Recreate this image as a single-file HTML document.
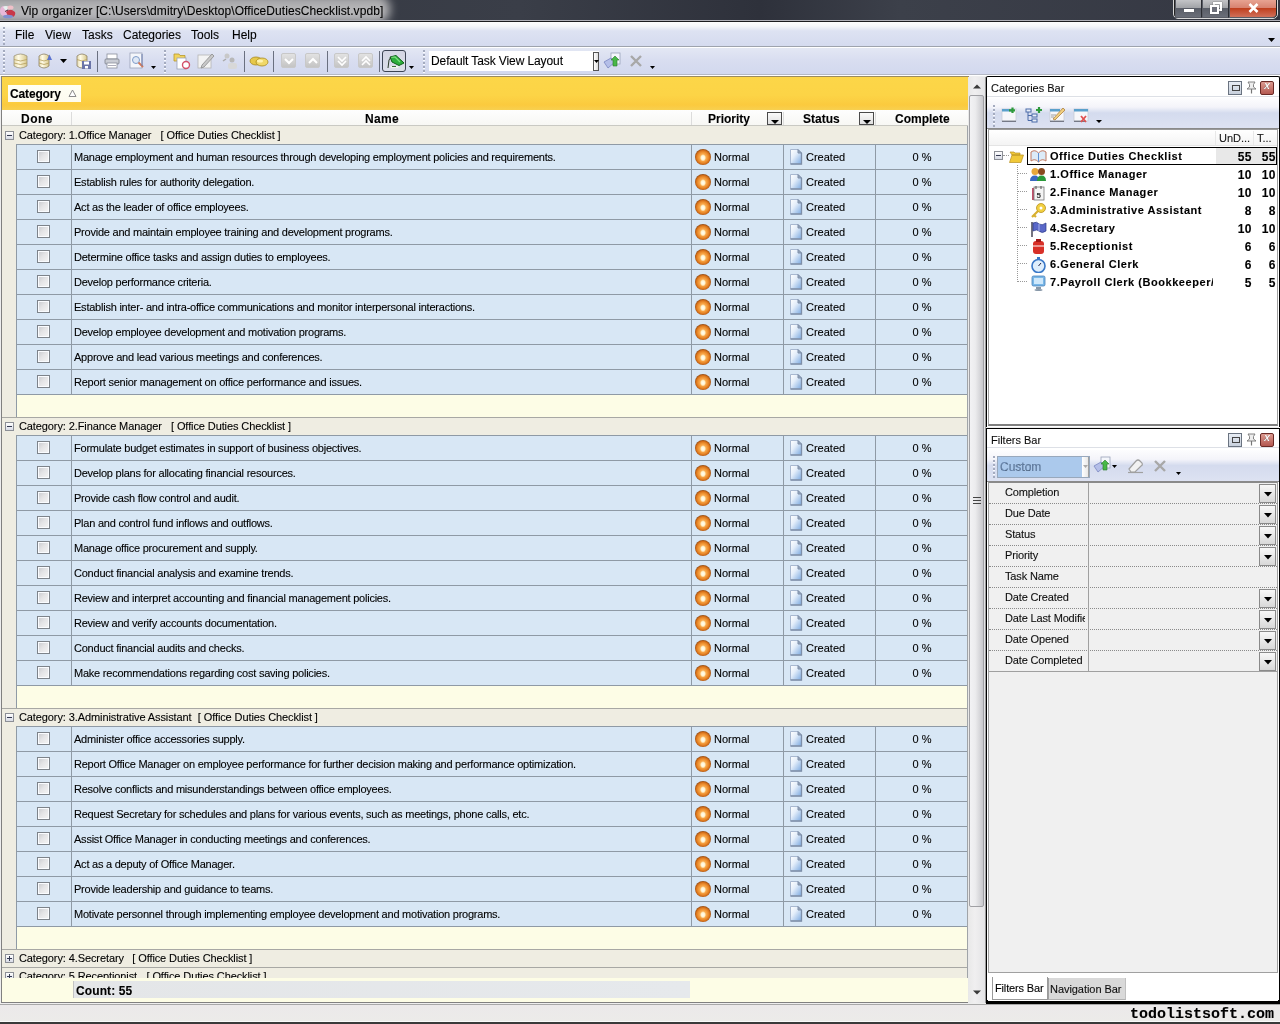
<!DOCTYPE html>
<html><head><meta charset="utf-8"><style>
*{box-sizing:border-box;margin:0;padding:0}
#page{position:absolute;left:0;top:0;width:1280px;height:1024px;overflow:hidden;will-change:transform;-webkit-text-stroke:0.1px #000}
html,body{width:1280px;height:1024px;overflow:hidden;background:#eeeeee;font-family:"Liberation Sans",sans-serif;font-size:11px;color:#000;position:relative}
.abs{position:absolute}
/* title bar */
#title{position:absolute;left:0;top:0;width:1280px;height:22px;background:linear-gradient(90deg,#33363f 0,#3a3e48 520px,#2e313b 760px,#3c404a 900px,#343742 1280px);border-bottom:1px solid #1c1c20;overflow:hidden}
#title::after{content:"";position:absolute;left:0;top:20px;width:1280px;height:1px;background:#b0b0b8}
#title .glow{position:absolute;left:-20px;top:-6px;width:410px;height:30px;border-radius:14px;background:linear-gradient(#9a9a9c,#b4b4b6 40%,#bababc 70%,#a4a4a8);filter:blur(5px)}
#title .tx{position:absolute;left:21px;top:4px;font-size:12px;color:#000;white-space:nowrap;letter-spacing:0.08px}
#title .ic{position:absolute;left:1px;top:3px;width:15px;height:14px}
.wbtn{position:absolute;top:0;height:18px;border:1px solid #5a5d66;border-top:none;background:linear-gradient(#8b8e96,#4e525c)}
/* menu */
#menu{position:absolute;left:0;top:22px;width:1280px;height:25px;background:linear-gradient(#fdfdfe 0,#f6f7fb 4px,#dde2f2 9px,#d5dbef 100%);border-bottom:1px solid #9ea3ad}
#menu span{position:absolute;top:6px;font-size:12px}
.grip{position:absolute;width:2px;background:repeating-linear-gradient(#a4abbf 0 2px,#fafbff 2px 3px,transparent 3px 4px)}
#tb{position:absolute;left:0;top:47px;width:1280px;height:29px;background:linear-gradient(#e4e8f4 0,#d8ddf0 50%,#d2d8ee 100%);box-shadow:inset 0 1px 0 #fff;border-bottom:1px solid #fff}
#tb::after{content:"";position:absolute;left:0;top:27px;width:1280px;height:1px;background:#b4b8c4}
.sep{position:absolute;top:4px;width:1px;height:21px;background:#6a7080}
/* grid */
#grid{position:absolute;left:0;top:0;width:1px;height:1px}
#gridbg{position:absolute;left:1px;top:76px;width:968px;height:927px;border:1px solid #808080;border-top-color:#9a8a60;border-right:none;background:#fdfde6}
#groupband{position:absolute;left:2px;top:77px;width:966px;height:33px;background:linear-gradient(#fcd648 0,#fcd446 55%,#fbca3e 85%,#f8d050 100%)}
#catbtn{position:absolute;left:8px;top:85px;width:73px;height:17px;background:linear-gradient(#fffff4,#fdfbf0);font-weight:bold;font-size:12px}
#hdr{position:absolute;left:2px;top:110px;width:966px;height:16px;background:linear-gradient(#fefefe,#f7f7f4);border-bottom:1px solid #c9c9c3}
#hdr span{position:absolute;top:2px;font-weight:bold;font-size:12px}
#rowsclip{position:absolute;left:0;top:126px;width:968px;height:852px;overflow:hidden}
.grp{position:absolute;left:2px;width:966px;background:#efede2}
.grp .gt,.grp .gt2{position:absolute;left:17px;white-space:nowrap;letter-spacing:-0.1px}
.ebox{position:absolute;left:3px;top:4px;width:9px;height:9px;border:1px solid #8c8f96;background:linear-gradient(#fff,#d8dbe6)}
.ebox .mn{position:absolute;left:1px;top:3px;width:5px;height:1px;background:#353a52}
.ebox .pl{position:absolute;left:3px;top:1px;width:1px;height:5px;background:#353a52}
.row{position:absolute;left:16px;width:952px;height:25px;background:#d8e7f5;border-top:1px solid #8f9aa5;border-left:1px solid #8f9aa5;border-right:1px solid #8f9aa5}
.row>span{position:absolute;top:0;height:24px;line-height:25px;white-space:nowrap;overflow:hidden}
.row .cb{left:20px;top:5px;width:13px;height:13px;border:1px solid #7d838a;box-shadow:inset 0 0 0 1px #fafcff;background:linear-gradient(135deg,#c6c8cc 0,#e4e4e6 45%,#f6f6f6 100%)}
.row .nm{left:54px;width:620px;border-left:1px solid #8f9aa5;padding-left:2px;letter-spacing:-0.23px}
.row .pr{left:674px;width:92px;border-left:1px solid #8f9aa5;padding-left:22px}
.row .st{left:766px;width:92px;border-left:1px solid #8f9aa5;padding-left:22px}
.row .cp{left:858px;width:92px;border-left:1px solid #8f9aa5;text-align:center;padding-left:1px}
.orb{position:absolute;left:3px;top:4px;width:16px;height:16px;border-radius:50%;background:radial-gradient(ellipse 3px 3.6px at 50% 55%,#fffef4 0,#fff3d0 60%,rgba(255,230,170,0) 100%),radial-gradient(circle at 50% 52%,#ffd890 0,#f6a040 4px,#e88a2c 5.5px,#d87018 6.8px,#9a5218 8px)}
.doc{position:absolute;left:5px;top:3px;width:15px;height:17px}
.newrow{position:absolute;left:16px;width:952px;height:23px;background:#fdfde6;border-top:1px solid #8f9aa5;border-left:1px solid #8f9aa5}
.gutter{position:absolute;left:2px;width:14px;background:#efede2}
#footer{position:absolute;left:2px;top:978px;width:966px;height:24px;background:#fdfde6}
#footer .cnt{position:absolute;left:71px;top:3px;width:617px;height:17px;background:linear-gradient(90deg,#e4e6e8,#e6e9ec);border-left:1px solid #c4c4c4;font-weight:bold;font-size:12px;padding-left:2px;line-height:20px;letter-spacing:0.1px}
#vscroll{position:absolute;left:968px;top:77px;width:18px;height:926px;background:linear-gradient(90deg,#e8e8e8,#f0eff0 40%,#e4e4e6);border-right:1px solid #9a9a9a}
#thumb{position:absolute;left:1px;top:18px;width:15px;height:812px;border:1px solid #a0a0a4;border-radius:2px;background:linear-gradient(90deg,#f2f2f4 0,#ececee 40%,#c8c8cc 100%)}
/* right panel */
#right{position:absolute;left:986px;top:77px;width:294px;height:926px;border:2px solid #000;border-right:1px solid #000;background:#fff}
#status{position:absolute;left:0;top:1004px;width:1280px;height:18px;background:linear-gradient(#ebe9ea,#ecebe9);border-top:1px solid #a8a8a8;border-bottom:1px solid #fafafa}
#status span{position:absolute;left:1130px;top:1px;font-family:"Liberation Mono",monospace;font-weight:bold;font-size:15px}
#taskbar{position:absolute;left:0;top:1022px;width:1280px;height:2px;background:#3a3a3a}
.wframe{position:absolute;left:1173px;top:-2px;width:105px;height:21px;border:1px solid #d8d8d8;border-radius:0 0 5px 5px;background:#222}
.wbtn{position:absolute;top:0;height:18px;border-right:1px solid #2b2d33;background:linear-gradient(#c3c4c7 0,#a2a4a8 45%,#5a5e68 50%,#6a6e78 100%)}
.wbtn.close{border-right:none;border-radius:0 0 4px 0;background:linear-gradient(#e7a392 0,#d88370 45%,#c0401f 50%,#d0705a 100%)}
.gbtn{position:absolute;top:6px;width:15px;height:15px;border-radius:2px;background:linear-gradient(#e2e2e2,#c4c4c4);border:1px solid #c8c8c8}
.gbtn svg{position:absolute;left:0;top:0}
.ptitle{position:absolute;left:987px;width:292px;height:19px;background:#fff;border-bottom:1px solid #dde0e6;padding-left:4px;line-height:21px;font-size:11px;color:#111}
.pbtns{position:absolute;left:1228px;width:46px;height:14px}
.pbtns .pf{position:absolute;left:0;top:0;width:14px;height:14px;border:1px solid #6a7380;background:linear-gradient(#e8edf4,#c8d0dc)}
.pbtns .pf::after{content:"";position:absolute;left:3px;top:3px;width:6px;height:4px;border:1px solid #444}
.pbtns .pp{position:absolute;left:18px;top:0}
.pbtns .pc{position:absolute;left:32px;top:0;width:14px;height:14px;border:1px solid #6a2a26;border-radius:2px;background:linear-gradient(#dc9a90,#b45850)}
.pbtns .pc::after{content:"x";position:absolute;left:3px;top:-3px;color:#fff;font-weight:bold;font-size:11px}
.ptb{position:absolute;left:987px;width:292px;background:linear-gradient(#fdfdfe 0,#f4f4fa 30%,#d4dbee 50%,#dde2f2 100%);border-bottom:1px solid #8a8a8a}
.tn{position:absolute;left:1050px;margin-top:1px;font-weight:bold;font-size:11px;white-space:nowrap;width:163px;overflow:hidden;letter-spacing:0.55px}
.tc1{position:absolute;left:1216px;margin-top:1px;width:36px;text-align:right;font-weight:bold;font-size:12px;letter-spacing:0.5px}
.tc2{position:absolute;left:1254px;margin-top:1px;width:22px;text-align:right;font-weight:bold;font-size:12px;letter-spacing:0.5px}
.pgn{position:absolute;left:1005px;margin-top:0px;font-size:11px;letter-spacing:-0.15px;white-space:nowrap;width:80px;overflow:hidden;color:#111}
.pgb{position:absolute;left:1259px;width:17px;height:19px;border:1px solid #8a8a8a;background:linear-gradient(#f8f8f8,#d8d8d8)}
.hsep{position:absolute;top:112px;width:1px;height:13px;background:#dcdcdc}
.hdd{position:absolute;top:112px;width:15px;height:13px;border:1px solid #4a4a4a;background:linear-gradient(#fafafa,#e0e0e0)}
.gl{position:absolute;left:2px;width:966px;height:1px;background:#a8a8a4}

</style></head><body><div id="page">
<svg width="0" height="0" style="position:absolute"><defs><linearGradient id="dg" x1="0" y1="0" x2="1" y2="1"><stop offset="0" stop-color="#ffffff"/><stop offset=".4" stop-color="#e4eefa"/><stop offset="1" stop-color="#7aa8e0"/></linearGradient></defs></svg>
<div id="title"><div class="glow"></div>
<svg class="abs" style="left:0;top:2px" width="17" height="17" viewBox="0 0 17 17"><ellipse cx="4" cy="9" rx="4" ry="5" fill="#e8b8d8"/><path d="M3 5 Q6 3 9 5 L6 9Z" fill="#e6f2ee"/><path d="M6 10 Q9 7 12 8 L15 10 Q16 13 13 15 L8 14Z" fill="#c83848"/><ellipse cx="10.5" cy="5.5" rx="3" ry="2" fill="#f0c0c8"/><ellipse cx="8" cy="14.5" rx="5" ry="1.8" fill="#8090d0"/><path d="M5 9.5 L8 8" stroke="#502830" stroke-width="1"/></svg>
<div class="tx">Vip organizer [C:\Users\dmitry\Desktop\OfficeDutiesChecklist.vpdb]</div>
<div class="wframe"></div>
<div class="wbtn" style="left:1175px;width:27px"><div class="abs" style="left:8px;top:9px;width:10px;height:3px;background:#fff;box-shadow:0 0 1px #444"></div></div>
<div class="wbtn" style="left:1202px;width:27px"><div class="abs" style="left:10px;top:2px;width:9px;height:9px;border:2px solid #fff;box-shadow:0 0 1px #444"></div><div class="abs" style="left:7px;top:5px;width:9px;height:9px;border:2px solid #fff;background:#6d707a;box-shadow:0 0 1px #444"></div></div>
<div class="wbtn close" style="left:1229px;width:47px"><svg class="abs" style="left:18px;top:3px" width="11" height="10" viewBox="0 0 11 10"><path d="M1.5 1 L9.5 9 M9.5 1 L1.5 9" stroke="#fff" stroke-width="2.6"/></svg></div>
</div>
<div id="menu"><div class="grip" style="left:3px;top:5px;height:18px"></div>
<span style="left:15px">File</span><span style="left:45px">View</span><span style="left:82px">Tasks</span><span style="left:123px">Categories</span><span style="left:191px">Tools</span><span style="left:232px">Help</span>
<svg class="abs" style="left:1268px;top:16px" width="8" height="5"><path d="M0 0H7L3.5 4Z" fill="#000"/></svg></div>
<div id="tb"><div class="grip" style="left:3px;top:3px;height:23px"></div>
<svg class="abs" style="left:13px;top:6px" width="15" height="16" viewBox="0 0 15 16"><defs><linearGradient id="dbg" x1="0" x2="1"><stop offset="0" stop-color="#e4dab0"/><stop offset=".35" stop-color="#fffbe6"/><stop offset="1" stop-color="#d8c88c"/></linearGradient></defs><path d="M1 3 Q7.5 -1 14 3 V13 Q7.5 17 1 13Z" fill="url(#dbg)" stroke="#9c9478" stroke-width=".8"/><path d="M1 6.5 Q7.5 9.5 14 6.5 M1 10 Q7.5 13 14 10" stroke="#b59e5a" fill="none" stroke-width=".8"/></svg>
<svg class="abs" style="left:38px;top:6px" width="15" height="16" viewBox="0 0 15 16"><path d="M1 3 Q6 -1 11 3 V13 Q6 17 1 13Z" fill="url(#dbg)" stroke="#8d8166" stroke-width=".8"/><path d="M1 6.5 Q6 9.5 11 6.5 M1 10 Q6 13 11 10" stroke="#b59e5a" fill="none" stroke-width=".8"/><path d="M9 7 L11.5 1.5 L14 7Z" fill="#5a72d0"/></svg>
<svg class="abs" style="left:60px;top:12px" width="8" height="5"><path d="M0 0H7L3.5 4Z" fill="#000"/></svg>
<svg class="abs" style="left:76px;top:6px" width="16" height="17" viewBox="0 0 16 17"><path d="M1 3 Q6 -1 11 3 V13 Q6 17 1 13Z" fill="url(#dbg)" stroke="#8d8166" stroke-width=".8"/><path d="M1 6.5 Q6 9.5 11 6.5" stroke="#b59e5a" fill="none" stroke-width=".8"/><rect x="6" y="8" width="9" height="8" fill="#6a74a8"/><rect x="8" y="8.5" width="5" height="3" fill="#fff"/><rect x="9" y="13" width="3" height="2.5" fill="#fff"/></svg>
<div class="sep" style="left:97px"></div>
<svg class="abs" style="left:104px;top:6px" width="16" height="16" viewBox="0 0 16 16"><rect x="3" y="1" width="10" height="5" fill="#fff" stroke="#8a8f9c" stroke-width=".8"/><rect x="1" y="6" width="14" height="5" rx="1" fill="#c9ccd4" stroke="#7b808c" stroke-width=".8"/><rect x="3" y="10" width="10" height="5" fill="#fff" stroke="#8a8f9c" stroke-width=".8"/><path d="M4 12.5H12" stroke="#99a" stroke-width=".8"/></svg>
<svg class="abs" style="left:129px;top:5px" width="16" height="17" viewBox="0 0 16 17"><rect x="1" y="1" width="12" height="15" fill="#f4f6fb" stroke="#9aa2b8" stroke-width=".8"/><circle cx="7" cy="8" r="3.5" fill="#dfe8f6" stroke="#7f9cc8" stroke-width="1"/><path d="M9.5 10.5 L14 15" stroke="#d27a5a" stroke-width="2"/><path d="M13 2V14" stroke="#6d7fae" stroke-width="1"/></svg>
<svg class="abs" style="left:151px;top:19px" width="6" height="4"><path d="M0 0H5L2.5 3Z" fill="#000"/></svg>
<div class="grip" style="left:164px;top:3px;height:23px"></div>
<svg class="abs" style="left:173px;top:5px" width="18" height="18" viewBox="0 0 18 18"><path d="M1 2H6L7 3.5H12V9H1Z" fill="#f2d45c" stroke="#b8982c" stroke-width=".8"/><rect x="4" y="6" width="9" height="11" fill="#fff" stroke="#9aa2b8" stroke-width=".8"/><circle cx="13" cy="13" r="3.5" fill="#fff" stroke="#d2506a" stroke-width="1.4"/></svg>
<svg class="abs" style="left:197px;top:5px" width="18" height="17" viewBox="0 0 18 17"><rect x="1" y="3" width="13" height="13" fill="#f3f3f3" stroke="#b4b4b4" stroke-width=".8"/><path d="M5 13 L15 2 L17 4 L7 15 L4 16Z" fill="#c8c8c8" stroke="#8c8c8c" stroke-width=".8"/></svg>
<svg class="abs" style="left:221px;top:5px" width="18" height="18" viewBox="0 0 18 18"><circle cx="6" cy="4" r="2.5" fill="#c8c8c8"/><circle cx="11" cy="8" r="2.5" fill="#b8b8b8"/><rect x="7" y="11" width="9" height="6" rx="2" fill="#d8d8d8"/><path d="M2 9 L5 7" stroke="#aaa" stroke-width="1.5"/></svg>
<div class="sep" style="left:244px"></div>
<svg class="abs" style="left:249px;top:8px" width="20" height="12" viewBox="0 0 20 12"><ellipse cx="7" cy="6" rx="6" ry="4" fill="#e6c84a" stroke="#a88a20" stroke-width=".8"/><ellipse cx="13" cy="7" rx="6" ry="4" fill="#f0d868" stroke="#a88a20" stroke-width=".8"/><ellipse cx="11" cy="6" rx="3" ry="1.5" fill="#fff3b0"/></svg>
<div class="sep" style="left:273px"></div>
<div class="gbtn" style="left:281px"><svg width="14" height="14"><path d="M3 5 L7 9 L11 5" stroke="#fff" stroke-width="2" fill="none"/></svg></div>
<div class="gbtn" style="left:305px"><svg width="14" height="14"><path d="M3 9 L7 5 L11 9" stroke="#fff" stroke-width="2" fill="none"/></svg></div>
<div class="sep" style="left:327px"></div>
<div class="gbtn" style="left:334px"><svg width="14" height="14"><path d="M3 3 L7 7 L11 3 M3 7 L7 11 L11 7" stroke="#fff" stroke-width="1.6" fill="none"/></svg></div>
<div class="gbtn" style="left:358px"><svg width="14" height="14"><path d="M3 7 L7 3 L11 7 M3 11 L7 7 L11 11" stroke="#fff" stroke-width="1.6" fill="none"/></svg></div>
<div class="sep" style="left:379px"></div>
<div class="abs" style="left:382px;top:3px;width:24px;height:22px;border:1px solid #3c4454;border-radius:3px;background:linear-gradient(#d4d6e4,#dcdfea)"><svg class="abs" style="left:0;top:0" width="22" height="20" viewBox="0 0 22 20"><path d="M7 6 L13 4.5 L21 12 L16 14.5 L9 11Z" fill="#2cae3c" stroke="#0c6018" stroke-width="1"/><path d="M8 6.5 L12 6 L17 11" stroke="#7ae07e" stroke-width="1.2" fill="none"/><path d="M5 17 L6 9 L8 6" stroke="#2a3a2a" stroke-width="1" fill="none"/><path d="M7 15 L16 15 L15 17 L8 17Z" fill="#eef6ee"/><path d="M9 15.5 H13" stroke="#3a6a3a" stroke-width="1"/></svg></div>
<svg class="abs" style="left:409px;top:19px" width="6" height="4"><path d="M0 0H5L2.5 3Z" fill="#000"/></svg>
<div class="grip" style="left:423px;top:3px;height:23px"></div>
<div class="abs" style="left:429px;top:4px;width:170px;height:20px;background:#fff"><span class="abs" style="left:2px;top:3px;font-size:12px;letter-spacing:-0.1px">Default Task View Layout</span><div class="abs" style="left:164px;top:1px;width:6px;height:19px;border:1px solid #555;background:linear-gradient(90deg,#fff,#ddd)"><svg class="abs" style="left:0;top:7px" width="5" height="4"><path d="M0 0H5L2.5 3Z" fill="#000"/></svg></div></div>
<svg class="abs" style="left:603px;top:5px" width="19" height="18" viewBox="0 0 19 18"><rect x="8" y="1" width="9" height="11" fill="#f4f6fb" stroke="#9aa2b8" stroke-width=".8"/><path d="M1 10 L8 6 L12 10 L5 16Z" fill="#b4bee8" stroke="#7a86c0" stroke-width=".8"/><path d="M10 14 V8 L8 8 L12 4 L16 8 L14 8 V14Z" fill="#48b848" stroke="#2a7a2a" stroke-width=".6"/></svg>
<svg class="abs" style="left:629px;top:7px" width="14" height="14" viewBox="0 0 14 14"><path d="M2 2 L12 12 M12 2 L2 12" stroke="#a8a8a8" stroke-width="2.4"/></svg>
<svg class="abs" style="left:650px;top:19px" width="6" height="4"><path d="M0 0H5L2.5 3Z" fill="#000"/></svg>
</div>

<div id="grid"><div id="gridbg"></div><div id="groupband"></div><div id="catbtn"><span class="abs" style="left:2px;top:2px;letter-spacing:-0.15px">Category</span><svg class="abs" style="left:60px;top:4px" width="9" height="9" viewBox="0 0 9 9"><path d="M4.5 1 L8 7.5 H1Z" fill="#fff" stroke="#8a8a8a" stroke-width="1"/></svg></div><div id="hdr"><span style="left:19px;letter-spacing:0.5px">Done</span><span style="left:363px;letter-spacing:0.3px">Name</span><span style="left:706px">Priority</span><span style="left:801px">Status</span><span style="left:893px">Complete</span></div><div class="hsep" style="left:71px"></div><div class="hsep" style="left:691px"></div><div class="hsep" style="left:783px"></div><div class="hsep" style="left:875px"></div><div class="hdd" style="left:767px"><svg class="abs" style="left:3px;top:7px" width="8" height="5"><path d="M0 0H8L4 4Z" fill="#000"/></svg></div><div class="hdd" style="left:859px"><svg class="abs" style="left:3px;top:7px" width="8" height="5"><path d="M0 0H8L4 4Z" fill="#000"/></svg></div>
<div id="rowsclip">
<div class="grp" style="top:0px;height:18px"><span class="ebox" style="top:5px"><i class="mn"></i></span><span class="gt" style="top:3px">Category: 1.Office Manager</span><span class="gt2" style="top:3px;left:158.6px">[ Office Duties Checklist ]</span></div>
<div class="gutter" style="top:18px;height:273px"></div>
<div class="row" style="top:18px"><span class="cb"></span><span class="nm">Manage employment and human resources through developing employment policies and requirements.</span><span class="pr"><i class="orb"></i>Normal</span><span class="st"><svg class="doc" width="15" height="17" viewBox="0 0 15 17"><path d="M1.5 1.5H9L12.5 5V16H1.5Z" fill="url(#dg)" stroke="#a8b8d0" stroke-width="1"/><path d="M12.5 5V16H1.5" fill="none" stroke="#7d8ea8" stroke-width="1.3"/><path d="M9 1.5V5H12.5Z" fill="#9aa8bc" stroke="#7d8ea8" stroke-width="1"/></svg>Created</span><span class="cp">0 %</span></div>
<div class="row" style="top:43px"><span class="cb"></span><span class="nm">Establish rules for authority delegation.</span><span class="pr"><i class="orb"></i>Normal</span><span class="st"><svg class="doc" width="15" height="17" viewBox="0 0 15 17"><path d="M1.5 1.5H9L12.5 5V16H1.5Z" fill="url(#dg)" stroke="#a8b8d0" stroke-width="1"/><path d="M12.5 5V16H1.5" fill="none" stroke="#7d8ea8" stroke-width="1.3"/><path d="M9 1.5V5H12.5Z" fill="#9aa8bc" stroke="#7d8ea8" stroke-width="1"/></svg>Created</span><span class="cp">0 %</span></div>
<div class="row" style="top:68px"><span class="cb"></span><span class="nm">Act as the leader of office employees.</span><span class="pr"><i class="orb"></i>Normal</span><span class="st"><svg class="doc" width="15" height="17" viewBox="0 0 15 17"><path d="M1.5 1.5H9L12.5 5V16H1.5Z" fill="url(#dg)" stroke="#a8b8d0" stroke-width="1"/><path d="M12.5 5V16H1.5" fill="none" stroke="#7d8ea8" stroke-width="1.3"/><path d="M9 1.5V5H12.5Z" fill="#9aa8bc" stroke="#7d8ea8" stroke-width="1"/></svg>Created</span><span class="cp">0 %</span></div>
<div class="row" style="top:93px"><span class="cb"></span><span class="nm">Provide and maintain employee training and development programs.</span><span class="pr"><i class="orb"></i>Normal</span><span class="st"><svg class="doc" width="15" height="17" viewBox="0 0 15 17"><path d="M1.5 1.5H9L12.5 5V16H1.5Z" fill="url(#dg)" stroke="#a8b8d0" stroke-width="1"/><path d="M12.5 5V16H1.5" fill="none" stroke="#7d8ea8" stroke-width="1.3"/><path d="M9 1.5V5H12.5Z" fill="#9aa8bc" stroke="#7d8ea8" stroke-width="1"/></svg>Created</span><span class="cp">0 %</span></div>
<div class="row" style="top:118px"><span class="cb"></span><span class="nm">Determine office tasks and assign duties to employees.</span><span class="pr"><i class="orb"></i>Normal</span><span class="st"><svg class="doc" width="15" height="17" viewBox="0 0 15 17"><path d="M1.5 1.5H9L12.5 5V16H1.5Z" fill="url(#dg)" stroke="#a8b8d0" stroke-width="1"/><path d="M12.5 5V16H1.5" fill="none" stroke="#7d8ea8" stroke-width="1.3"/><path d="M9 1.5V5H12.5Z" fill="#9aa8bc" stroke="#7d8ea8" stroke-width="1"/></svg>Created</span><span class="cp">0 %</span></div>
<div class="row" style="top:143px"><span class="cb"></span><span class="nm">Develop performance criteria.</span><span class="pr"><i class="orb"></i>Normal</span><span class="st"><svg class="doc" width="15" height="17" viewBox="0 0 15 17"><path d="M1.5 1.5H9L12.5 5V16H1.5Z" fill="url(#dg)" stroke="#a8b8d0" stroke-width="1"/><path d="M12.5 5V16H1.5" fill="none" stroke="#7d8ea8" stroke-width="1.3"/><path d="M9 1.5V5H12.5Z" fill="#9aa8bc" stroke="#7d8ea8" stroke-width="1"/></svg>Created</span><span class="cp">0 %</span></div>
<div class="row" style="top:168px"><span class="cb"></span><span class="nm">Establish inter- and intra-office communications and monitor interpersonal interactions.</span><span class="pr"><i class="orb"></i>Normal</span><span class="st"><svg class="doc" width="15" height="17" viewBox="0 0 15 17"><path d="M1.5 1.5H9L12.5 5V16H1.5Z" fill="url(#dg)" stroke="#a8b8d0" stroke-width="1"/><path d="M12.5 5V16H1.5" fill="none" stroke="#7d8ea8" stroke-width="1.3"/><path d="M9 1.5V5H12.5Z" fill="#9aa8bc" stroke="#7d8ea8" stroke-width="1"/></svg>Created</span><span class="cp">0 %</span></div>
<div class="row" style="top:193px"><span class="cb"></span><span class="nm">Develop employee development and motivation programs.</span><span class="pr"><i class="orb"></i>Normal</span><span class="st"><svg class="doc" width="15" height="17" viewBox="0 0 15 17"><path d="M1.5 1.5H9L12.5 5V16H1.5Z" fill="url(#dg)" stroke="#a8b8d0" stroke-width="1"/><path d="M12.5 5V16H1.5" fill="none" stroke="#7d8ea8" stroke-width="1.3"/><path d="M9 1.5V5H12.5Z" fill="#9aa8bc" stroke="#7d8ea8" stroke-width="1"/></svg>Created</span><span class="cp">0 %</span></div>
<div class="row" style="top:218px"><span class="cb"></span><span class="nm">Approve and lead various meetings and conferences.</span><span class="pr"><i class="orb"></i>Normal</span><span class="st"><svg class="doc" width="15" height="17" viewBox="0 0 15 17"><path d="M1.5 1.5H9L12.5 5V16H1.5Z" fill="url(#dg)" stroke="#a8b8d0" stroke-width="1"/><path d="M12.5 5V16H1.5" fill="none" stroke="#7d8ea8" stroke-width="1.3"/><path d="M9 1.5V5H12.5Z" fill="#9aa8bc" stroke="#7d8ea8" stroke-width="1"/></svg>Created</span><span class="cp">0 %</span></div>
<div class="row" style="top:243px"><span class="cb"></span><span class="nm">Report senior management on office performance and issues.</span><span class="pr"><i class="orb"></i>Normal</span><span class="st"><svg class="doc" width="15" height="17" viewBox="0 0 15 17"><path d="M1.5 1.5H9L12.5 5V16H1.5Z" fill="url(#dg)" stroke="#a8b8d0" stroke-width="1"/><path d="M12.5 5V16H1.5" fill="none" stroke="#7d8ea8" stroke-width="1.3"/><path d="M9 1.5V5H12.5Z" fill="#9aa8bc" stroke="#7d8ea8" stroke-width="1"/></svg>Created</span><span class="cp">0 %</span></div>
<div class="newrow" style="top:268px"></div>
<div class="gl" style="top:291px"></div>
<div class="grp" style="top:292px;height:17px"><span class="ebox" style="top:4px"><i class="mn"></i></span><span class="gt" style="top:2px">Category: 2.Finance Manager</span><span class="gt2" style="top:2px;left:169px">[ Office Duties Checklist ]</span></div>
<div class="gutter" style="top:309px;height:273px"></div>
<div class="row" style="top:309px"><span class="cb"></span><span class="nm">Formulate budget estimates in support of business objectives.</span><span class="pr"><i class="orb"></i>Normal</span><span class="st"><svg class="doc" width="15" height="17" viewBox="0 0 15 17"><path d="M1.5 1.5H9L12.5 5V16H1.5Z" fill="url(#dg)" stroke="#a8b8d0" stroke-width="1"/><path d="M12.5 5V16H1.5" fill="none" stroke="#7d8ea8" stroke-width="1.3"/><path d="M9 1.5V5H12.5Z" fill="#9aa8bc" stroke="#7d8ea8" stroke-width="1"/></svg>Created</span><span class="cp">0 %</span></div>
<div class="row" style="top:334px"><span class="cb"></span><span class="nm">Develop plans for allocating financial resources.</span><span class="pr"><i class="orb"></i>Normal</span><span class="st"><svg class="doc" width="15" height="17" viewBox="0 0 15 17"><path d="M1.5 1.5H9L12.5 5V16H1.5Z" fill="url(#dg)" stroke="#a8b8d0" stroke-width="1"/><path d="M12.5 5V16H1.5" fill="none" stroke="#7d8ea8" stroke-width="1.3"/><path d="M9 1.5V5H12.5Z" fill="#9aa8bc" stroke="#7d8ea8" stroke-width="1"/></svg>Created</span><span class="cp">0 %</span></div>
<div class="row" style="top:359px"><span class="cb"></span><span class="nm">Provide cash flow control and audit.</span><span class="pr"><i class="orb"></i>Normal</span><span class="st"><svg class="doc" width="15" height="17" viewBox="0 0 15 17"><path d="M1.5 1.5H9L12.5 5V16H1.5Z" fill="url(#dg)" stroke="#a8b8d0" stroke-width="1"/><path d="M12.5 5V16H1.5" fill="none" stroke="#7d8ea8" stroke-width="1.3"/><path d="M9 1.5V5H12.5Z" fill="#9aa8bc" stroke="#7d8ea8" stroke-width="1"/></svg>Created</span><span class="cp">0 %</span></div>
<div class="row" style="top:384px"><span class="cb"></span><span class="nm">Plan and control fund inflows and outflows.</span><span class="pr"><i class="orb"></i>Normal</span><span class="st"><svg class="doc" width="15" height="17" viewBox="0 0 15 17"><path d="M1.5 1.5H9L12.5 5V16H1.5Z" fill="url(#dg)" stroke="#a8b8d0" stroke-width="1"/><path d="M12.5 5V16H1.5" fill="none" stroke="#7d8ea8" stroke-width="1.3"/><path d="M9 1.5V5H12.5Z" fill="#9aa8bc" stroke="#7d8ea8" stroke-width="1"/></svg>Created</span><span class="cp">0 %</span></div>
<div class="row" style="top:409px"><span class="cb"></span><span class="nm">Manage office procurement and supply.</span><span class="pr"><i class="orb"></i>Normal</span><span class="st"><svg class="doc" width="15" height="17" viewBox="0 0 15 17"><path d="M1.5 1.5H9L12.5 5V16H1.5Z" fill="url(#dg)" stroke="#a8b8d0" stroke-width="1"/><path d="M12.5 5V16H1.5" fill="none" stroke="#7d8ea8" stroke-width="1.3"/><path d="M9 1.5V5H12.5Z" fill="#9aa8bc" stroke="#7d8ea8" stroke-width="1"/></svg>Created</span><span class="cp">0 %</span></div>
<div class="row" style="top:434px"><span class="cb"></span><span class="nm">Conduct financial analysis and examine trends.</span><span class="pr"><i class="orb"></i>Normal</span><span class="st"><svg class="doc" width="15" height="17" viewBox="0 0 15 17"><path d="M1.5 1.5H9L12.5 5V16H1.5Z" fill="url(#dg)" stroke="#a8b8d0" stroke-width="1"/><path d="M12.5 5V16H1.5" fill="none" stroke="#7d8ea8" stroke-width="1.3"/><path d="M9 1.5V5H12.5Z" fill="#9aa8bc" stroke="#7d8ea8" stroke-width="1"/></svg>Created</span><span class="cp">0 %</span></div>
<div class="row" style="top:459px"><span class="cb"></span><span class="nm">Review and interpret accounting and financial management policies.</span><span class="pr"><i class="orb"></i>Normal</span><span class="st"><svg class="doc" width="15" height="17" viewBox="0 0 15 17"><path d="M1.5 1.5H9L12.5 5V16H1.5Z" fill="url(#dg)" stroke="#a8b8d0" stroke-width="1"/><path d="M12.5 5V16H1.5" fill="none" stroke="#7d8ea8" stroke-width="1.3"/><path d="M9 1.5V5H12.5Z" fill="#9aa8bc" stroke="#7d8ea8" stroke-width="1"/></svg>Created</span><span class="cp">0 %</span></div>
<div class="row" style="top:484px"><span class="cb"></span><span class="nm">Review and verify accounts documentation.</span><span class="pr"><i class="orb"></i>Normal</span><span class="st"><svg class="doc" width="15" height="17" viewBox="0 0 15 17"><path d="M1.5 1.5H9L12.5 5V16H1.5Z" fill="url(#dg)" stroke="#a8b8d0" stroke-width="1"/><path d="M12.5 5V16H1.5" fill="none" stroke="#7d8ea8" stroke-width="1.3"/><path d="M9 1.5V5H12.5Z" fill="#9aa8bc" stroke="#7d8ea8" stroke-width="1"/></svg>Created</span><span class="cp">0 %</span></div>
<div class="row" style="top:509px"><span class="cb"></span><span class="nm">Conduct financial audits and checks.</span><span class="pr"><i class="orb"></i>Normal</span><span class="st"><svg class="doc" width="15" height="17" viewBox="0 0 15 17"><path d="M1.5 1.5H9L12.5 5V16H1.5Z" fill="url(#dg)" stroke="#a8b8d0" stroke-width="1"/><path d="M12.5 5V16H1.5" fill="none" stroke="#7d8ea8" stroke-width="1.3"/><path d="M9 1.5V5H12.5Z" fill="#9aa8bc" stroke="#7d8ea8" stroke-width="1"/></svg>Created</span><span class="cp">0 %</span></div>
<div class="row" style="top:534px"><span class="cb"></span><span class="nm">Make recommendations regarding cost saving policies.</span><span class="pr"><i class="orb"></i>Normal</span><span class="st"><svg class="doc" width="15" height="17" viewBox="0 0 15 17"><path d="M1.5 1.5H9L12.5 5V16H1.5Z" fill="url(#dg)" stroke="#a8b8d0" stroke-width="1"/><path d="M12.5 5V16H1.5" fill="none" stroke="#7d8ea8" stroke-width="1.3"/><path d="M9 1.5V5H12.5Z" fill="#9aa8bc" stroke="#7d8ea8" stroke-width="1"/></svg>Created</span><span class="cp">0 %</span></div>
<div class="newrow" style="top:559px"></div>
<div class="gl" style="top:582px"></div>
<div class="grp" style="top:583px;height:17px"><span class="ebox" style="top:4px"><i class="mn"></i></span><span class="gt" style="top:2px">Category: 3.Administrative Assistant</span><span class="gt2" style="top:2px;left:195.8px">[ Office Duties Checklist ]</span></div>
<div class="gutter" style="top:600px;height:223px"></div>
<div class="row" style="top:600px"><span class="cb"></span><span class="nm">Administer office accessories supply.</span><span class="pr"><i class="orb"></i>Normal</span><span class="st"><svg class="doc" width="15" height="17" viewBox="0 0 15 17"><path d="M1.5 1.5H9L12.5 5V16H1.5Z" fill="url(#dg)" stroke="#a8b8d0" stroke-width="1"/><path d="M12.5 5V16H1.5" fill="none" stroke="#7d8ea8" stroke-width="1.3"/><path d="M9 1.5V5H12.5Z" fill="#9aa8bc" stroke="#7d8ea8" stroke-width="1"/></svg>Created</span><span class="cp">0 %</span></div>
<div class="row" style="top:625px"><span class="cb"></span><span class="nm">Report Office Manager on employee performance for further decision making and performance optimization.</span><span class="pr"><i class="orb"></i>Normal</span><span class="st"><svg class="doc" width="15" height="17" viewBox="0 0 15 17"><path d="M1.5 1.5H9L12.5 5V16H1.5Z" fill="url(#dg)" stroke="#a8b8d0" stroke-width="1"/><path d="M12.5 5V16H1.5" fill="none" stroke="#7d8ea8" stroke-width="1.3"/><path d="M9 1.5V5H12.5Z" fill="#9aa8bc" stroke="#7d8ea8" stroke-width="1"/></svg>Created</span><span class="cp">0 %</span></div>
<div class="row" style="top:650px"><span class="cb"></span><span class="nm">Resolve conflicts and misunderstandings between office employees.</span><span class="pr"><i class="orb"></i>Normal</span><span class="st"><svg class="doc" width="15" height="17" viewBox="0 0 15 17"><path d="M1.5 1.5H9L12.5 5V16H1.5Z" fill="url(#dg)" stroke="#a8b8d0" stroke-width="1"/><path d="M12.5 5V16H1.5" fill="none" stroke="#7d8ea8" stroke-width="1.3"/><path d="M9 1.5V5H12.5Z" fill="#9aa8bc" stroke="#7d8ea8" stroke-width="1"/></svg>Created</span><span class="cp">0 %</span></div>
<div class="row" style="top:675px"><span class="cb"></span><span class="nm">Request Secretary for schedules and plans for various events, such as meetings, phone calls, etc.</span><span class="pr"><i class="orb"></i>Normal</span><span class="st"><svg class="doc" width="15" height="17" viewBox="0 0 15 17"><path d="M1.5 1.5H9L12.5 5V16H1.5Z" fill="url(#dg)" stroke="#a8b8d0" stroke-width="1"/><path d="M12.5 5V16H1.5" fill="none" stroke="#7d8ea8" stroke-width="1.3"/><path d="M9 1.5V5H12.5Z" fill="#9aa8bc" stroke="#7d8ea8" stroke-width="1"/></svg>Created</span><span class="cp">0 %</span></div>
<div class="row" style="top:700px"><span class="cb"></span><span class="nm">Assist Office Manager in conducting meetings and conferences.</span><span class="pr"><i class="orb"></i>Normal</span><span class="st"><svg class="doc" width="15" height="17" viewBox="0 0 15 17"><path d="M1.5 1.5H9L12.5 5V16H1.5Z" fill="url(#dg)" stroke="#a8b8d0" stroke-width="1"/><path d="M12.5 5V16H1.5" fill="none" stroke="#7d8ea8" stroke-width="1.3"/><path d="M9 1.5V5H12.5Z" fill="#9aa8bc" stroke="#7d8ea8" stroke-width="1"/></svg>Created</span><span class="cp">0 %</span></div>
<div class="row" style="top:725px"><span class="cb"></span><span class="nm">Act as a deputy of Office Manager.</span><span class="pr"><i class="orb"></i>Normal</span><span class="st"><svg class="doc" width="15" height="17" viewBox="0 0 15 17"><path d="M1.5 1.5H9L12.5 5V16H1.5Z" fill="url(#dg)" stroke="#a8b8d0" stroke-width="1"/><path d="M12.5 5V16H1.5" fill="none" stroke="#7d8ea8" stroke-width="1.3"/><path d="M9 1.5V5H12.5Z" fill="#9aa8bc" stroke="#7d8ea8" stroke-width="1"/></svg>Created</span><span class="cp">0 %</span></div>
<div class="row" style="top:750px"><span class="cb"></span><span class="nm">Provide leadership and guidance to teams.</span><span class="pr"><i class="orb"></i>Normal</span><span class="st"><svg class="doc" width="15" height="17" viewBox="0 0 15 17"><path d="M1.5 1.5H9L12.5 5V16H1.5Z" fill="url(#dg)" stroke="#a8b8d0" stroke-width="1"/><path d="M12.5 5V16H1.5" fill="none" stroke="#7d8ea8" stroke-width="1.3"/><path d="M9 1.5V5H12.5Z" fill="#9aa8bc" stroke="#7d8ea8" stroke-width="1"/></svg>Created</span><span class="cp">0 %</span></div>
<div class="row" style="top:775px"><span class="cb"></span><span class="nm">Motivate personnel through implementing employee development and motivation programs.</span><span class="pr"><i class="orb"></i>Normal</span><span class="st"><svg class="doc" width="15" height="17" viewBox="0 0 15 17"><path d="M1.5 1.5H9L12.5 5V16H1.5Z" fill="url(#dg)" stroke="#a8b8d0" stroke-width="1"/><path d="M12.5 5V16H1.5" fill="none" stroke="#7d8ea8" stroke-width="1.3"/><path d="M9 1.5V5H12.5Z" fill="#9aa8bc" stroke="#7d8ea8" stroke-width="1"/></svg>Created</span><span class="cp">0 %</span></div>
<div class="newrow" style="top:800px"></div>
<div class="gl" style="top:823px"></div>
<div class="grp" style="top:824px;height:17px"><span class="ebox" style="top:4px"><i class="mn"></i><i class="pl"></i></span><span class="gt" style="top:2px">Category: 4.Secretary</span><span class="gt2" style="top:2px;left:130.3px">[ Office Duties Checklist ]</span></div>
<div class="gl" style="top:841px"></div>
<div class="grp" style="top:842px;height:17px"><span class="ebox" style="top:4px"><i class="mn"></i><i class="pl"></i></span><span class="gt" style="top:2px">Category: 5.Receptionist</span><span class="gt2" style="top:2px;left:144.5px">[ Office Duties Checklist ]</span></div>
</div>
<div class="abs" style="left:967px;top:126px;width:1px;height:852px;background:#a0a4a8"></div>
<div id="footer"><div class="cnt">Count: 55</div></div>
</div>
<div id="vscroll"><svg class="abs" style="left:5px;top:7px" width="8" height="5"><path d="M0 4.5H8L4 0.5Z" fill="#3a3a3a"/></svg><div id="thumb"><div class="abs" style="left:3px;top:401px;width:8px;height:1px;background:#444;box-shadow:0 3px 0 #444,0 6px 0 #444"></div></div><svg class="abs" style="left:5px;top:913px" width="8" height="5"><path d="M0 0.5H8L4 4.5Z" fill="#3a3a3a"/></svg></div>
<div id="rp">
 <!-- categories bar -->
 <div class="abs" style="left:986px;top:76px;width:294px;height:351px;border:1px solid #000;border-bottom:none;border-radius:2px 2px 0 0;background:#fff"></div>
 <div class="ptitle" style="top:78px">Categories Bar</div>
 <div class="pbtns" style="top:81px"><i class="pf"></i><svg class="pp" width="11" height="13" viewBox="0 0 11 13"><path d="M2 1H9L7.5 3.5V6L10 8H1L3.5 6V3.5Z" fill="#eee" stroke="#777" stroke-width=".9"/><path d="M5.5 8V12.5" stroke="#777" stroke-width="1.2"/></svg><i class="pc"></i></div>
 <div class="ptb" style="top:98px;height:31px">
  <div class="grip" style="left:6px;top:7px;height:22px;width:2px"></div>
  <svg class="abs" style="left:14px;top:8px" width="16" height="16" viewBox="0 0 16 16"><rect x="1" y="3" width="14" height="12" fill="#f7f7fa" stroke="#c8ccd6" stroke-width=".8"/><rect x="1" y="3" width="10" height="2.5" fill="#5aa0cc"/><path d="M1 15.3H15" stroke="#6a6f7c" stroke-width="1.2"/><path d="M8 4.3H14 M11.5 1.5V7" stroke="#2e9a3c" stroke-width="2.2"/></svg>
  <svg class="abs" style="left:38px;top:8px" width="18" height="17" viewBox="0 0 18 17"><rect x="1" y="3" width="5" height="3" fill="#e8eef8" stroke="#4a6aa8" stroke-width="1"/><rect x="7" y="8" width="5" height="3" fill="#e8eef8" stroke="#4a6aa8" stroke-width="1"/><rect x="7" y="13" width="5" height="3" fill="#e8eef8" stroke="#4a6aa8" stroke-width="1"/><path d="M3 6V14.5H7 M3 9.5H7" stroke="#4a6aa8" stroke-width="1" fill="none"/><path d="M11 4H17 M14 1V7" stroke="#2e9a3c" stroke-width="2.2"/></svg>
  <svg class="abs" style="left:62px;top:8px" width="17" height="16" viewBox="0 0 17 16"><rect x="1" y="3" width="14" height="12" fill="#f7f7fa" stroke="#c8ccd6" stroke-width=".8"/><rect x="1" y="3" width="10" height="2.5" fill="#5aa0cc"/><path d="M1 15.3H15" stroke="#6a6f7c" stroke-width="1.2"/><path d="M4 13 L14 2 L16 4 L6 14Z" fill="#f0d080" stroke="#b08040" stroke-width=".8"/><path d="M2 9H7 M2 11H5" stroke="#888" stroke-width=".8"/></svg>
  <svg class="abs" style="left:86px;top:10px" width="17" height="15" viewBox="0 0 17 15"><rect x="1" y="1" width="14" height="12" fill="#f7f7fa" stroke="#c8ccd6" stroke-width=".8"/><rect x="1" y="1" width="14" height="2.5" fill="#5aa0cc"/><path d="M1 13.3H12" stroke="#6a6f7c" stroke-width="1.2"/><path d="M8 8 L13 14 M13 8 L8 14" stroke="#e05050" stroke-width="1.8"/></svg>
  <svg class="abs" style="left:109px;top:22px" width="7" height="4"><path d="M0 0H6L3 3Z" fill="#000"/></svg>
 </div>
 <div class="abs" style="left:988px;top:129px;width:290px;height:297px;border:1px solid #a0a0a0;border-top:1px solid #9a9a9a;border-bottom:2px solid #808080;background:#fff"></div>
 <div class="abs" style="left:989px;top:130px;width:288px;height:16px;background:linear-gradient(#fff,#f4f4f4);border-bottom:1px solid #e4e4e4"></div>
 <div class="abs" style="left:1215px;top:131px;width:1px;height:14px;background:#e8e8e8"></div>
 <div class="abs" style="left:1253px;top:131px;width:1px;height:14px;background:#e8e8e8"></div>
 <span class="abs" style="left:1219px;top:132px;font-size:11px;color:#222">UnD...</span>
 <span class="abs" style="left:1257px;top:132px;font-size:11px;color:#222">T...</span>
 <div id="tree">
  <div class="abs" style="left:1216px;top:148px;width:60px;height:16px;background:#e8e8e8"></div>
  <div class="abs" style="left:1027px;top:147px;width:250px;height:18px;border:1px solid #000"></div>
  <div class="ebox" style="left:994px;top:151px"><i class="mn"></i></div>
  <div class="abs" style="left:1003px;top:155px;width:6px;border-top:1px dotted #999"></div>
  <div class="abs" style="left:1017px;top:165px;height:117px;border-left:1px dotted #999"></div>
  <svg class="abs" style="left:1009px;top:151px" width="15" height="12" viewBox="0 0 15 12"><path d="M1 1H5L6 2H11V4H3L0.5 11.5H12L14.5 4H3Z" fill="#f0c838" stroke="#b89020" stroke-width=".7"/></svg>
  <div class="abs" style="left:1030px;top:149px"><svg width="17" height="14" viewBox="0 0 17 14"><path d="M1 3 Q5 0 8.5 4 Q12 0 16 3 V12 Q12 9 8.5 13 Q5 9 1 12Z" fill="#dcebf8" stroke="#c07860" stroke-width="1"/><path d="M8.5 4V13" stroke="#6090d0" stroke-width="1"/></svg></div>
  <span class="tn" style="top:149px">Office Duties Checklist</span><span class="tc1" style="top:149px">55</span><span class="tc2" style="top:149px">55</span>
  <div class="abs" style="left:1018px;top:173px;width:9px;border-top:1px dotted #999"></div>
  <div class="abs" style="left:1030px;top:167px"><svg width="17" height="14" viewBox="0 0 17 14"><circle cx="5" cy="4.5" r="3.5" fill="#e8a83a"/><circle cx="11.5" cy="4.5" r="3.5" fill="#8a4a20"/><path d="M0 14 Q0 8.5 5 8.5 Q9 8.5 9 14Z" fill="#3a68c0"/><path d="M7 14 Q7 8.5 11.5 8.5 Q16 8.5 16 14Z" fill="#2a9a3a"/></svg></div>
  <span class="tn" style="top:167px">1.Office Manager</span><span class="tc1" style="top:167px">10</span><span class="tc2" style="top:167px">10</span>
  <div class="abs" style="left:1018px;top:191px;width:9px;border-top:1px dotted #999"></div>
  <div class="abs" style="left:1030px;top:185px"><svg width="17" height="16" viewBox="0 0 17 16"><rect x="2" y="3" width="3" height="12" fill="#c0506a"/><rect x="4" y="2" width="10" height="13" fill="#f4f4f4" stroke="#777" stroke-width=".8"/><text x="6.5" y="13" font-size="8" font-family="Liberation Sans" font-weight="bold" fill="#333">5</text><path d="M6 1V4 M11 1V4" stroke="#666" stroke-width="1.2"/></svg></div>
  <span class="tn" style="top:185px">2.Finance Manager</span><span class="tc1" style="top:185px">10</span><span class="tc2" style="top:185px">10</span>
  <div class="abs" style="left:1018px;top:209px;width:9px;border-top:1px dotted #999"></div>
  <div class="abs" style="left:1030px;top:203px"><svg width="17" height="16" viewBox="0 0 17 16"><circle cx="11" cy="5" r="4.5" fill="#f2d040" stroke="#b89020" stroke-width=".8"/><circle cx="11" cy="5" r="1.5" fill="#fff"/><path d="M8 8 L2 14 M4 12 L6 14" stroke="#d8b030" stroke-width="2.2"/></svg></div>
  <span class="tn" style="top:203px">3.Administrative Assistant</span><span class="tc1" style="top:203px">8</span><span class="tc2" style="top:203px">8</span>
  <div class="abs" style="left:1018px;top:227px;width:9px;border-top:1px dotted #999"></div>
  <div class="abs" style="left:1030px;top:221px"><svg width="17" height="16" viewBox="0 0 17 16"><path d="M2 1V16" stroke="#445" stroke-width="1.5"/><path d="M3 2 Q7 0 9 3 Q12 5 16 2 V10 Q12 13 9 10 Q7 8 3 10Z" fill="#5a68c8" stroke="#2a3888" stroke-width=".7"/><path d="M9 3V10" stroke="#aab4ee" stroke-width="1"/></svg></div>
  <span class="tn" style="top:221px">4.Secretary</span><span class="tc1" style="top:221px">10</span><span class="tc2" style="top:221px">10</span>
  <div class="abs" style="left:1018px;top:245px;width:9px;border-top:1px dotted #999"></div>
  <div class="abs" style="left:1030px;top:239px"><svg width="17" height="16" viewBox="0 0 17 16"><rect x="3" y="2" width="11" height="13" rx="3" fill="#d83028"/><path d="M3 7H14" stroke="#fff" stroke-width="1"/><rect x="6" y="0" width="5" height="3" fill="#a01818"/></svg></div>
  <span class="tn" style="top:239px">5.Receptionist</span><span class="tc1" style="top:239px">6</span><span class="tc2" style="top:239px">6</span>
  <div class="abs" style="left:1018px;top:263px;width:9px;border-top:1px dotted #999"></div>
  <div class="abs" style="left:1030px;top:257px"><svg width="17" height="16" viewBox="0 0 17 16"><circle cx="8.5" cy="9" r="6.5" fill="#dfeefc" stroke="#3a78c8" stroke-width="1.6"/><path d="M8.5 9 L11 6" stroke="#224" stroke-width="1"/><rect x="7" y="0" width="3" height="2.5" fill="#3a78c8"/></svg></div>
  <span class="tn" style="top:257px">6.General Clerk</span><span class="tc1" style="top:257px">6</span><span class="tc2" style="top:257px">6</span>
  <div class="abs" style="left:1018px;top:281px;width:9px;border-top:1px dotted #999"></div>
  <div class="abs" style="left:1030px;top:275px"><svg width="17" height="16" viewBox="0 0 17 16"><rect x="2" y="1" width="13" height="10" rx="1.5" fill="#7ab8e8" stroke="#4a80b8" stroke-width=".8"/><rect x="4" y="3" width="9" height="6" fill="#cfe8fb"/><path d="M6 12 H11 V14 H6Z" fill="#8898a8"/><ellipse cx="8.5" cy="15" rx="4" ry="1" fill="#8898a8"/></svg></div>
  <span class="tn" style="top:275px">7.Payroll Clerk (Bookkeeper/</span><span class="tc1" style="top:275px">5</span><span class="tc2" style="top:275px">5</span>
 </div>
 <!-- filters bar -->
 <div class="abs" style="left:986px;top:428px;width:294px;height:576px;border:1px solid #000;border-bottom:4px solid #000;background:#fff"></div>
 <div class="ptitle" style="top:429px;line-height:22px">Filters Bar</div>
 <div class="pbtns" style="top:433px"><i class="pf"></i><svg class="pp" width="11" height="13" viewBox="0 0 11 13"><path d="M2 1H9L7.5 3.5V6L10 8H1L3.5 6V3.5Z" fill="#eee" stroke="#777" stroke-width=".9"/><path d="M5.5 8V12.5" stroke="#777" stroke-width="1.2"/></svg><i class="pc"></i></div>
 <div class="ptb" style="top:450px;height:32px">
  <div class="grip" style="left:6px;top:6px;height:22px;width:2px"></div>
  <div class="abs" style="left:10px;top:6px;width:93px;height:22px;background:#abc9ec;border:1px solid #98a8bc"><span class="abs" style="left:2px;top:3px;font-size:12px;color:#6a88b0">Custom</span><div class="abs" style="left:84px;top:0;width:7px;height:20px;background:linear-gradient(90deg,#fff,#e8e8e8);border-right:1px solid #a0a0a0"><svg class="abs" style="left:1px;top:8px" width="5" height="4"><path d="M0 0H5L2.5 3Z" fill="#aaa"/></svg></div></div>
  <svg class="abs" style="left:106px;top:6px" width="19" height="18" viewBox="0 0 19 18"><rect x="8" y="1" width="9" height="11" fill="#f4f6fb" stroke="#9aa2b8" stroke-width=".8"/><path d="M1 10 L8 6 L12 10 L5 16Z" fill="#b4bee8" stroke="#7a86c0" stroke-width=".8"/><path d="M10 14 V8 L8 8 L12 4 L16 8 L14 8 V14Z" fill="#48b848" stroke="#2a7a2a" stroke-width=".6"/></svg>
  <svg class="abs" style="left:125px;top:15px" width="6" height="4"><path d="M0 0H5L2.5 3Z" fill="#000"/></svg>
  <svg class="abs" style="left:140px;top:8px" width="18" height="16" viewBox="0 0 18 16"><path d="M2 11 L9 3 Q11 1 13 3 L15 5 Q16 7 14 8 L8 14 L4 14Z" fill="#f2f2f2" stroke="#a0a0a0" stroke-width="1.2"/><path d="M1 14.5H16" stroke="#a0a0a0" stroke-width="1.2"/></svg>
  <svg class="abs" style="left:166px;top:9px" width="14" height="14" viewBox="0 0 14 14"><path d="M2 2 L12 12 M12 2 L2 12" stroke="#a8a8a8" stroke-width="2.4"/></svg>
  <svg class="abs" style="left:189px;top:22px" width="6" height="4"><path d="M0 0H5L2.5 3Z" fill="#000"/></svg>
 </div>
 <div class="abs" style="left:988px;top:481px;width:290px;height:492px;background:#f0f0f0;border:1px solid #a0a0a0;border-top:2px solid #8a8a8a;border-bottom:1px solid #a0a0a0"></div>
 <span class="pgn" style="top:486px">Completion</span>
 <div class="abs" style="left:989px;top:503px;width:288px;border-top:1px dotted #8a8a8a"></div>
 <div class="pgb" style="top:484px"><svg class="abs" style="left:4px;top:7px" width="8" height="5"><path d="M0 0H8L4 4.5Z" fill="#000"/></svg></div>
 <span class="pgn" style="top:507px">Due Date</span>
 <div class="abs" style="left:989px;top:524px;width:288px;border-top:1px dotted #8a8a8a"></div>
 <div class="pgb" style="top:505px"><svg class="abs" style="left:4px;top:7px" width="8" height="5"><path d="M0 0H8L4 4.5Z" fill="#000"/></svg></div>
 <span class="pgn" style="top:528px">Status</span>
 <div class="abs" style="left:989px;top:545px;width:288px;border-top:1px dotted #8a8a8a"></div>
 <div class="pgb" style="top:526px"><svg class="abs" style="left:4px;top:7px" width="8" height="5"><path d="M0 0H8L4 4.5Z" fill="#000"/></svg></div>
 <span class="pgn" style="top:549px">Priority</span>
 <div class="abs" style="left:989px;top:566px;width:288px;border-top:1px dotted #8a8a8a"></div>
 <div class="pgb" style="top:547px"><svg class="abs" style="left:4px;top:7px" width="8" height="5"><path d="M0 0H8L4 4.5Z" fill="#000"/></svg></div>
 <span class="pgn" style="top:570px">Task Name</span>
 <div class="abs" style="left:989px;top:587px;width:288px;border-top:1px dotted #8a8a8a"></div>
 <span class="pgn" style="top:591px">Date Created</span>
 <div class="abs" style="left:989px;top:608px;width:288px;border-top:1px dotted #8a8a8a"></div>
 <div class="pgb" style="top:589px"><svg class="abs" style="left:4px;top:7px" width="8" height="5"><path d="M0 0H8L4 4.5Z" fill="#000"/></svg></div>
 <span class="pgn" style="top:612px">Date Last Modifie</span>
 <div class="abs" style="left:989px;top:629px;width:288px;border-top:1px dotted #8a8a8a"></div>
 <div class="pgb" style="top:610px"><svg class="abs" style="left:4px;top:7px" width="8" height="5"><path d="M0 0H8L4 4.5Z" fill="#000"/></svg></div>
 <span class="pgn" style="top:633px">Date Opened</span>
 <div class="abs" style="left:989px;top:650px;width:288px;border-top:1px dotted #8a8a8a"></div>
 <div class="pgb" style="top:631px"><svg class="abs" style="left:4px;top:7px" width="8" height="5"><path d="M0 0H8L4 4.5Z" fill="#000"/></svg></div>
 <span class="pgn" style="top:654px">Date Completed</span>
 <div class="pgb" style="top:652px"><svg class="abs" style="left:4px;top:7px" width="8" height="5"><path d="M0 0H8L4 4.5Z" fill="#000"/></svg></div>
 <div class="abs" style="left:1088px;top:483px;width:1px;height:188px;background:#a0a0a0"></div>
 <div class="abs" style="left:989px;top:671px;width:288px;height:1px;background:#a0a0a0"></div>
 <div class="abs" style="left:988px;top:973px;width:290px;height:28px;background:#fff"></div>
 <div class="abs" style="left:992px;top:977px;width:56px;height:23px;background:#fff;border:1px solid #9a9a9a;border-top:none"><span class="abs" style="left:2px;top:5px;font-size:11px;letter-spacing:-0.15px;white-space:nowrap">Filters Bar</span></div>
 <div class="abs" style="left:1048px;top:978px;width:78px;height:22px;background:#d9d9d9;border-left:1px solid #a0a0a0;border-right:1px solid #c0c0c0;border-bottom:1px solid #b0b0b0"><span class="abs" style="left:1px;top:5px;font-size:11px;letter-spacing:-0.05px;color:#111;white-space:nowrap">Navigation Bar</span></div>
</div>

<div id="taskbar"></div>
<div id="status"><span>todolistsoft.com</span></div>
</div></body></html>
